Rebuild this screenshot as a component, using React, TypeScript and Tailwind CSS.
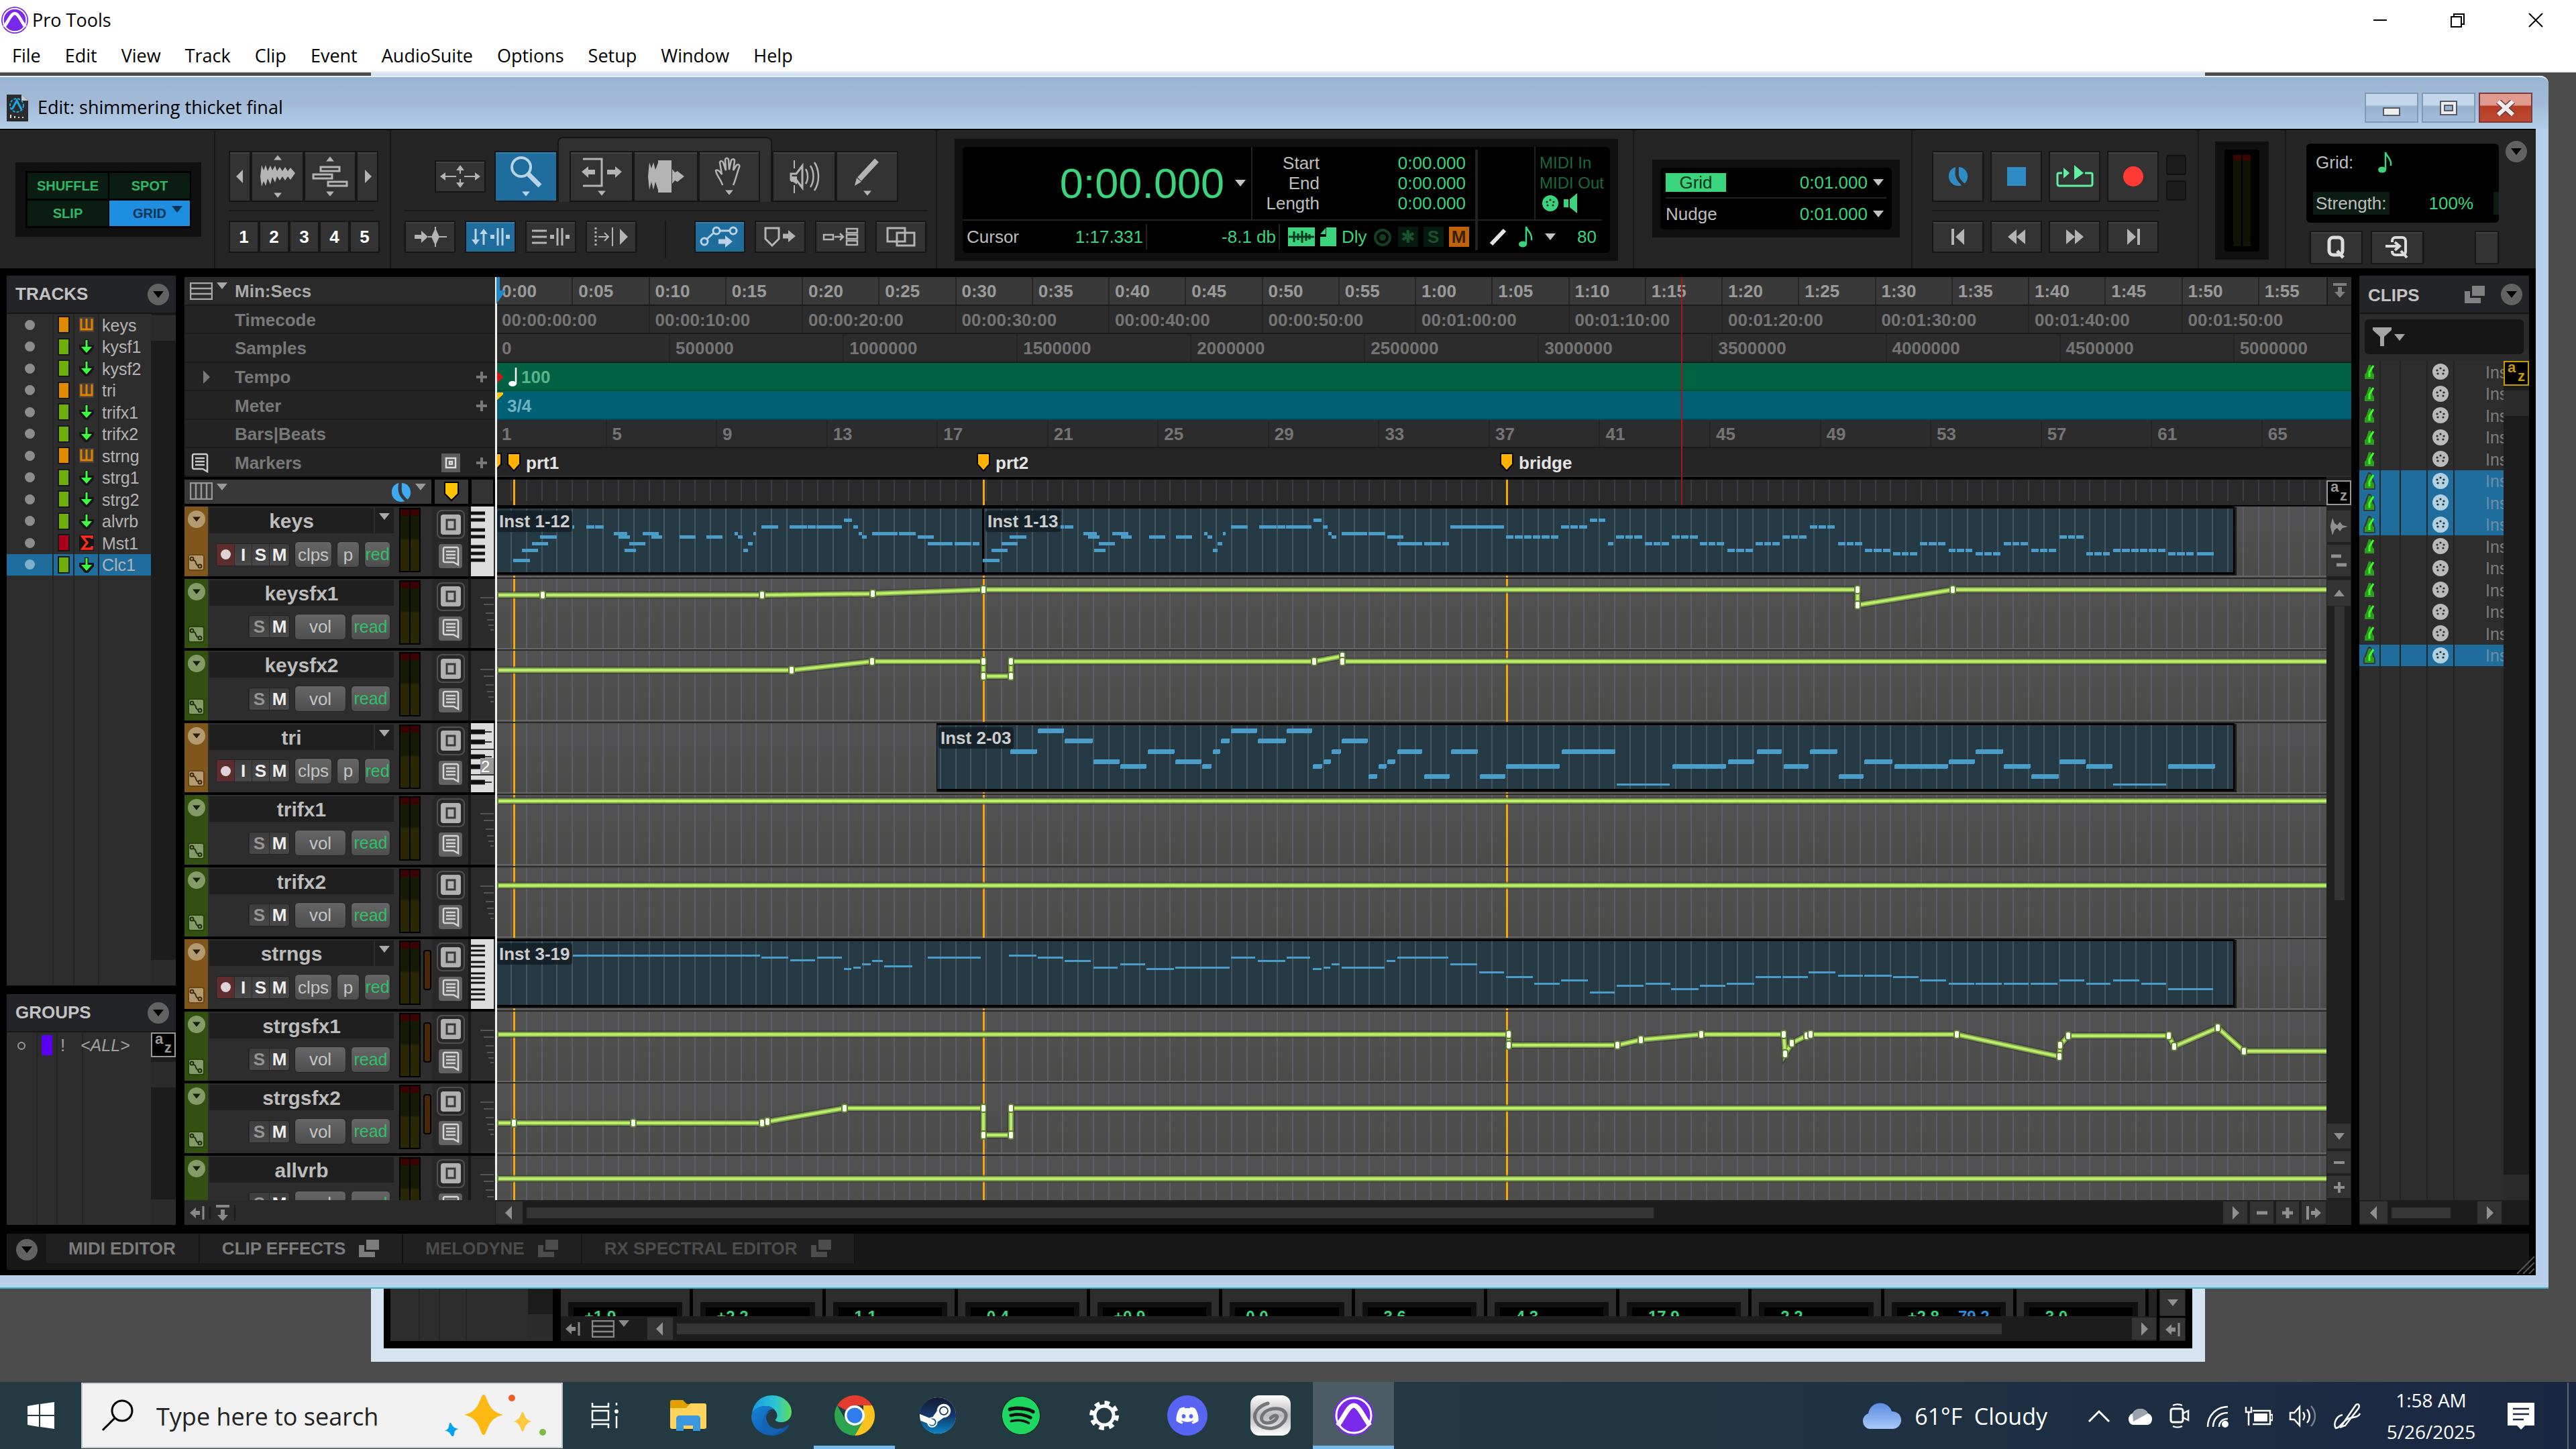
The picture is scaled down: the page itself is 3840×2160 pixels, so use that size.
import type { ReactNode } from "react";
import { FaDiscord, FaSpotify, FaSteam } from "react-icons/fa";

/* ---------- timeline data ---------- */

const PX_PER_SEC = 22.85;
const PX_PER_BAR = 41.14;
const SAMPLE_RATE = 44100;
const CLIP_END = 2593;

// [start, end, y] in lane pixels
type Note = [number, number, number];
type Point = [number, number];

interface Clip {
  name: string;
  start: number;
  end: number;
  notes: Note[];
  noteHeight: number;
}

interface Track {
  name: string;
  kind: "inst" | "aux";
  keyboard?: "wide" | "mid" | "narrow";
  clips?: Clip[];
  line?: Point[];
  gain?: boolean;
}

const melody: Note[] = [
  [27, 52, 80], [40, 64, 65], [55, 79, 55], [67, 92, 45], [115, 118, 30], [136, 148, 30],
  [149, 162, 30], [177, 197, 40], [184, 201, 45], [193, 210, 65], [200, 224, 55], [220, 244, 40],
  [233, 249, 45], [275, 299, 45], [315, 339, 45], [357, 362, 40], [362, 369, 45], [370, 377, 65],
  [377, 384, 55], [385, 389, 40], [397, 422, 30], [439, 465, 30], [466, 478, 30], [479, 517, 30],
  [520, 532, 20], [534, 541, 30], [542, 547, 40], [547, 554, 45], [562, 600, 40], [602, 627, 40],
  [630, 654, 45], [645, 682, 55], [685, 710, 55], [712, 722, 55],
];

// runs of repeated notes, three to the bar
const runs: Note[] = [
  [1507, 1587, 45], [1589, 1630, 30], [1632, 1657, 20], [1659, 1669, 55], [1671, 1712, 45],
  [1714, 1752, 55], [1754, 1795, 45], [1796, 1834, 55], [1837, 1877, 65], [1879, 1917, 55],
  [1919, 1957, 45], [1960, 1999, 30], [2002, 2040, 55], [2042, 2082, 65], [2084, 2122, 70],
  [2124, 2164, 55], [2167, 2204, 65], [2207, 2246, 70], [2249, 2287, 55], [2290, 2329, 65],
  [2332, 2370, 45], [2372, 2409, 70], [2412, 2492, 65], [2494, 2534, 70],
];

function splitRun([start, end, y]: Note): Note[] {
  const count = Math.max(1, Math.round((end - start) / 13.5));
  const step = (end - start) / count;
  return Array.from({ length: count }, (_, i): Note => [
    Math.round(start + i * step),
    Math.round(start + (i + 1) * step) - 2,
    y,
  ]);
}

const keysSecond: Note[] = [
  ...melody.map(([a, b, y]): Note => [a + 700, b + 700, y]),
  [1424, 1504, 30],
  ...runs.flatMap(splitRun),
  [2537, 2562, 70],
];

const triNotes: Note[] = [
  [768, 808, 42], [809, 848, 11], [849, 891, 26], [892, 931, 57], [932, 971, 64], [973, 1013, 42],
  [1014, 1053, 57], [1054, 1068, 64], [1070, 1081, 42], [1082, 1095, 26], [1097, 1136, 11],
  [1137, 1179, 26], [1180, 1218, 11], [1219, 1233, 64], [1235, 1246, 57], [1247, 1261, 42],
  [1262, 1301, 26], [1302, 1315, 79], [1317, 1329, 64], [1330, 1342, 57], [1345, 1382, 42],
  [1385, 1423, 79], [1425, 1465, 42], [1468, 1506, 79], [1507, 1587, 64], [1590, 1670, 42],
  [1672, 1751, 91], [1755, 1835, 64], [1838, 1877, 57], [1881, 1918, 42], [1921, 1958, 64],
  [1960, 2001, 42], [2003, 2040, 79], [2041, 2083, 57], [2086, 2166, 64], [2167, 2206, 57],
  [2207, 2248, 42], [2249, 2289, 64], [2290, 2331, 79], [2332, 2371, 57], [2372, 2411, 64],
  [2412, 2491, 91], [2494, 2564, 64],
];

const stringNotes: Note[] = [
  [116, 395, 24], [397, 437, 27], [440, 477, 31], [480, 517, 27], [520, 531, 44], [534, 545, 42],
  [547, 560, 37], [562, 578, 32], [580, 622, 40], [645, 724, 27], [766, 807, 24], [809, 847, 27], [849, 888, 32],
  [892, 928, 42], [932, 969, 37], [971, 1012, 44], [1014, 1095, 42], [1097, 1133, 27],
  [1137, 1178, 32], [1180, 1215, 27], [1219, 1232, 44], [1235, 1245, 42], [1247, 1259, 37],
  [1262, 1326, 42], [1329, 1342, 32], [1345, 1421, 27], [1424, 1464, 37], [1467, 1504, 49],
  [1507, 1547, 56], [1549, 1587, 66], [1589, 1629, 61], [1632, 1669, 79], [1672, 1712, 69],
  [1715, 1752, 66], [1753, 1794, 74], [1796, 1834, 69], [1836, 1877, 66], [1879, 1917, 56],
  [1919, 1957, 56], [1958, 1998, 49], [2002, 2039, 54], [2041, 2082, 54], [2084, 2122, 56],
  [2124, 2163, 61], [2167, 2205, 66], [2207, 2246, 66], [2249, 2286, 66], [2289, 2329, 66],
  [2332, 2369, 61], [2372, 2408, 66], [2412, 2451, 61], [2454, 2491, 66], [2494, 2561, 74],
];

const tracks: Track[] = [
  {
    name: "keys",
    kind: "inst",
    keyboard: "wide",
    clips: [
      { name: "Inst 1-12", start: 0, end: 728, notes: melody, noteHeight: 5 },
      { name: "Inst 1-13", start: 728, end: CLIP_END, notes: keysSecond, noteHeight: 5 },
    ],
  },
  {
    name: "keysfx1",
    kind: "aux",
    line: [[0, 24], [71, 24], [398, 24], [563, 22], [728, 16], [2031, 16], [2031, 39], [2173, 16], [4000, 16]],
  },
  {
    name: "keysfx2",
    kind: "aux",
    line: [
      [0, 29], [442, 29], [562, 16], [728, 16], [728, 38], [769, 38], [769, 16], [1221, 16],
      [1263, 8], [1263, 16], [4000, 16],
    ],
  },
  {
    name: "tri",
    kind: "inst",
    keyboard: "mid",
    clips: [{ name: "Inst 2-03", start: 658, end: CLIP_END, notes: triNotes, noteHeight: 7 }],
  },
  { name: "trifx1", kind: "aux", line: [[0, 9], [4000, 9]] },
  { name: "trifx2", kind: "aux", line: [[0, 27], [4000, 27]] },
  {
    name: "strngs",
    kind: "inst",
    keyboard: "narrow",
    gain: true,
    clips: [{ name: "Inst 3-19", start: 0, end: CLIP_END, notes: stringNotes, noteHeight: 3 }],
  },
  {
    name: "strgsfx1",
    kind: "aux",
    gain: true,
    line: [
      [0, 34], [1511, 34], [1511, 50], [1673, 50], [1708, 42], [1798, 34], [1921, 34], [1923, 63],
      [1933, 47], [1955, 36], [1961, 34], [2179, 34], [2332, 67], [2333, 50], [2345, 36], [2495, 36],
      [2503, 52], [2568, 24], [2607, 59], [4000, 59],
    ],
  },
  {
    name: "strgsfx2",
    kind: "aux",
    gain: true,
    line: [
      [0, 59], [28, 59], [206, 59], [398, 59], [406, 57], [521, 37], [728, 37], [728, 77], [769, 77],
      [769, 37], [4000, 37],
    ],
  },
  { name: "allvrb", kind: "aux", line: [[0, 34], [4000, 34]] },
];

const trackList = [
  { name: "keys", type: "inst" },
  { name: "kysf1", type: "aux" },
  { name: "kysf2", type: "aux" },
  { name: "tri", type: "inst" },
  { name: "trifx1", type: "aux" },
  { name: "trifx2", type: "aux" },
  { name: "strng", type: "inst" },
  { name: "strg1", type: "aux" },
  { name: "strg2", type: "aux" },
  { name: "alvrb", type: "aux" },
  { name: "Mst1", type: "master" },
  { name: "Clc1", type: "aux", selected: true },
];

const markers = [
  { name: "prt1", x: 28 },
  { name: "prt2", x: 728 },
  { name: "bridge", x: 1508 },
];

const mixLevels = ["+1.9", "+2.2", "-1.1", "-0.4", "+0.9", "0.0", "-3.6", "-4.3", "-17.9", "-2.2", "+2.8", "-3.0"];

const menus = ["File", "Edit", "View", "Track", "Clip", "Event", "AudioSuite", "Options", "Setup", "Window", "Help"];

/* ---------- small shared parts ---------- */

function Tri({ dir = "down", className = "" }: { dir?: "down" | "up" | "left" | "right"; className?: string }) {
  const points = {
    down: "0,0 16,0 8,10",
    up: "0,10 16,10 8,0",
    left: "12,0 12,20 2,10",
    right: "4,0 4,20 14,10",
  }[dir];
  const tall = dir === "left" || dir === "right";
  return (
    <svg viewBox={tall ? "0 0 16 20" : "0 0 16 10"} className={`shrink-0 ${tall ? "h-5 w-4" : "h-[10px] w-4"} ${className}`}>
      <polygon points={points} fill="currentColor" />
    </svg>
  );
}

function RoundMenu({ label }: { label: string }) {
  return (
    <button aria-label={label} className="flex size-8 shrink-0 items-center justify-center rounded-full bg-[#626262] text-black">
      <Tri />
    </button>
  );
}

function ToolButton({
  label,
  className = "",
  active = false,
  children,
}: {
  label: string;
  className?: string;
  active?: boolean;
  children?: ReactNode;
}) {
  return (
    <button
      aria-label={label}
      className={`flex shrink-0 items-center justify-center border-2 border-[#161616] ${
        active
          ? "bg-[#1f6d9c] text-[#b9d4e6] shadow-[inset_0_2px_0_#3480ad]"
          : "bg-[#333] text-[#b4b4b4] shadow-[inset_0_2px_0_#434343]"
      } ${className}`}
    >
      {children}
    </button>
  );
}

function Svg({ w, h, children, className = "" }: { w: number; h: number; children: ReactNode; className?: string }) {
  return (
    <svg width={w} height={h} viewBox={`0 0 ${w} ${h}`} fill="none" stroke="currentColor" strokeWidth="3" className={`shrink-0 ${className}`}>
      {children}
    </svg>
  );
}

function SortButton({ gold = false }: { gold?: boolean }) {
  return (
    <button
      aria-label="Sort by name"
      className={`relative h-[37px] w-full shrink-0 border-2 bg-black text-[22px] leading-4 font-bold ${
        gold ? "border-[#c89b00] text-[#c89b00]" : "border-[#999] text-[#999]"
      }`}
    >
      <span className="absolute top-0 left-1">a</span>
      <span className="absolute right-1 bottom-1">z</span>
    </button>
  );
}

function PopOut() {
  return (
    <Svg w={30} h={26}>
      <path d="M0 8h8v10h16v8H0z" fill="currentColor" stroke="none" />
      <rect x="11" y="0" width="19" height="15" fill="currentColor" stroke="none" />
    </Svg>
  );
}

function Beat({ color = "#2e8bc4" }: { color?: string }) {
  return (
    <svg viewBox="0 0 34 34" className="size-[30px] shrink-0">
      <path d="M13 1C5 3 1 9 1 17s6 15 15 16c3 0 5-1 7-1-7-6-11-13-11-20 0-4 0-7 1-11z" fill={color} />
      <path d="M18 1c8 0 15 7 15 16 0 5-2 9-5 12-6-5-10-10-10-16z" fill={color} />
    </svg>
  );
}

function MidiPlug({ color }: { color: string }) {
  return (
    <svg viewBox="0 0 24 24" className="size-6 shrink-0">
      <circle cx="12" cy="12" r="12" fill={color} />
      <g fill="#2a2a2a">
        <circle cx="7" cy="10" r="1.6" />
        <circle cx="12" cy="7" r="1.6" />
        <circle cx="17" cy="10" r="1.6" />
        <circle cx="8" cy="15" r="1.6" />
        <circle cx="16" cy="15" r="1.6" />
      </g>
    </svg>
  );
}

function EighthNote({ className = "" }: { className?: string }) {
  return (
    <svg viewBox="0 0 24 32" className={`h-8 w-6 shrink-0 ${className}`}>
      <ellipse cx="7" cy="27" rx="6" ry="4.5" fill="currentColor" />
      <path d="M12 27V1c2 7 9 9 8 20" fill="none" stroke="currentColor" strokeWidth="2.5" />
    </svg>
  );
}

/* ---------- application chrome ---------- */

function AvidLogo({ className }: { className: string }) {
  return (
    <svg viewBox="0 0 60 60" className={className}>
      <circle cx="30" cy="30" r="30" fill="#7a29ea" />
      <circle cx="30" cy="30" r="26" fill="none" stroke="#fff" strokeWidth="3" />
      <path d="M6 45C16 32 22 15 30 15S44 32 54 45" fill="none" stroke="#fff" strokeWidth="7" />
    </svg>
  );
}

function AppHeader() {
  return (
    <header className="border-b-2 border-[#eee] bg-white font-['Open_Sans','Segoe_UI',sans-serif] text-[27px] text-black">
      <div className="flex h-[60px] items-center">
        <AvidLogo className="ml-0.5 size-10" />
        <span className="ml-1.5">Pro Tools</span>
        <div className="ml-auto flex items-center pr-12">
          <button aria-label="Minimize" className="mr-[92px]">
            <Svg w={24} h={24}><path d="M2 12h20" strokeWidth="2" /></Svg>
          </button>
          <button aria-label="Restore" className="mr-[92px]">
            <Svg w={24} h={24}><path d="M2 7h15v15H2zM6 7V3h15v15h-4" strokeWidth="2" /></Svg>
          </button>
          <button aria-label="Close">
            <Svg w={24} h={24}><path d="M2 2l20 20M22 2L2 22" strokeWidth="2" /></Svg>
          </button>
        </div>
      </div>
      <nav className="flex h-[46px] items-center gap-9 pl-[18px]">
        {menus.map((menu) => (
          <button key={menu}>{menu}</button>
        ))}
      </nav>
    </header>
  );
}

function TitleBar() {
  return (
    <div className="flex h-[79px] shrink-0 items-center rounded-tr-xl border-t-2 border-[#e4ecf4] bg-gradient-to-b from-[#9ab5d2] via-[#a2bad7] to-[#b3cde9] pt-3.5 pr-6 pl-[10px] font-['Open_Sans','Segoe_UI',sans-serif] text-[27px] text-black">
      <svg viewBox="0 0 32 40" className="h-10 w-8">
        <path d="M0 0h22l10 9v31H0z" fill="#2b2b2b" />
        <path d="M22 0l10 9H22z" fill="#ccc" />
        <circle cx="15" cy="16" r="10" fill="none" stroke="#18a8e8" strokeWidth="2" strokeDasharray="4 2" />
        <path d="M8 22l7-13 7 13" fill="none" stroke="#18a8e8" strokeWidth="3" />
        <path d="M6 30v5M12 32v3M18 33v2M24 33v2" stroke="#ddd" strokeWidth="2" />
      </svg>
      <span className="ml-3.5 flex-1">Edit: shimmering thicket final</span>
      <div className="flex gap-[5px]">
        <button aria-label="Minimize window" className="flex h-[45px] w-20 items-center justify-center border-2 border-[#8199b8] bg-gradient-to-b from-[#c3d6ea] from-40% via-[#98b2cf] via-45% to-[#a5bdd9]">
          <svg viewBox="0 0 26 24" className="h-6 w-[26px]"><rect x="1" y="12" width="24" height="11" fill="#eee" stroke="#555a66" strokeWidth="2" /></svg>
        </button>
        <button aria-label="Maximize window" className="flex h-[45px] w-20 items-center justify-center border-2 border-[#8199b8] bg-gradient-to-b from-[#c3d6ea] from-40% via-[#98b2cf] via-45% to-[#a5bdd9]">
          <svg viewBox="0 0 26 22" className="h-[22px] w-[26px]"><path d="M1 1h24v20H1zM7 7v8h12V7z" fill="#eee" fillRule="evenodd" stroke="#555a66" strokeWidth="2" /></svg>
        </button>
        <button aria-label="Close window" className="flex h-[45px] w-20 items-center justify-center border-2 border-[#7c3a3a] bg-gradient-to-b from-[#e09a8e] from-40% via-[#b53c25] via-45% to-[#bd4a34]">
          <svg viewBox="0 0 28 24" className="h-6 w-7"><path d="M3 2l22 20M25 2L3 22" stroke="#6b3a35" strokeWidth="9" /><path d="M3 2l22 20M25 2L3 22" stroke="#f0eeee" strokeWidth="6" /></svg>
        </button>
      </div>
    </div>
  );
}

/* ---------- edit window toolbar ---------- */

function ModePanel() {
  const cell = "h-[38px] w-[120px] text-[20px] font-bold";
  return (
    <div className="w-[321px] shrink-0 border-r-2 border-[#191919] pt-12 pl-[23px]">
      <div className="w-[277px] bg-[#101010] px-[15px] py-[13px]">
        <div className="grid grid-cols-2 gap-[3px] bg-black p-[3px]">
          <button className={`${cell} bg-[#0b1d13] text-[#2fb865]`}>SHUFFLE</button>
          <button className={`${cell} bg-[#0b1d13] text-[#2fb865]`}>SPOT</button>
          <button className={`${cell} bg-[#0b1d13] text-[#2fb865]`}>SLIP</button>
          <button className={`${cell} flex items-center justify-center gap-2 bg-[#1d8ee0] pl-6 text-[#0b3557]`}>
            GRID
            <Tri className="mt-2 self-start" />
          </button>
        </div>
      </div>
    </div>
  );
}

function ZoomPanel() {
  return (
    <div className="w-[262px] shrink-0 border-r-2 border-[#191919] pt-[31px] pl-5">
      <div className="flex h-[76px]">
        <ToolButton label="Zoom out" className="w-[33px]"><Tri dir="left" /></ToolButton>
        <ToolButton label="Zoom audio" className="w-[79px] flex-col gap-1">
          <Tri dir="up" className="scale-75" />
          <Svg w={52} h={38}>
            <path d="M0 19l2-17 3 8 3-8 3 9 4-8 3 7 4-7 3 8 4-6 4 6 4-6 4 6 4-5 7 8-7 10-4-5-4 6-4-6-4 6-4-6-3 9-4-8-3 11-4-9-3 11-3-7-3 8z" fill="currentColor" stroke="none" />
          </Svg>
          <Tri className="scale-75" />
        </ToolButton>
        <ToolButton label="Zoom MIDI" className="w-[78px] flex-col gap-1">
          <Tri dir="up" className="scale-75" />
          <Svg w={54} h={34}>
            <path d="M13 3h28v6H13zM2 14h28v6H2zM24 25h28v6H24z" />
          </Svg>
          <Tri className="scale-75" />
        </ToolButton>
        <ToolButton label="Zoom in" className="w-[33px]"><Tri dir="right" /></ToolButton>
      </div>
      <div className="mt-3 h-0.5 w-[216px] bg-[#181818]" />
      <div className="mt-[14px] flex">
        {[1, 2, 3, 4, 5].map((n) => (
          <button key={n} className="h-12 w-[45px] border-2 border-[#161616] bg-[#333] text-[26px] font-bold text-white">
            {n}
          </button>
        ))}
      </div>
    </div>
  );
}

function ToolsPanel() {
  return (
    <div className="w-[814px] shrink-0 border-r-2 border-[#191919] pt-[31px] pr-3 pl-5">
      <div className="flex h-[76px] items-center pl-[45px]">
        <ToolButton label="Zoom toggle" className="h-12 w-[76px]">
          <Svg w={60} h={34}>
            <path d="M6 17h18M36 17h18M30 4v9M30 21v9" strokeWidth="2" />
            <path d="M0 17l8-6v12zM60 17l-8-6v12zM30 0l-6 8h12zM30 34l-6-8h12z" fill="currentColor" stroke="none" />
          </Svg>
        </ToolButton>
        <ToolButton label="Zoomer" active className="ml-[13px] h-full w-[94px] flex-col gap-1">
          <Svg w={50} h={48}><circle cx="18" cy="17" r="14" strokeWidth="4" /><path d="M28 27l18 18" strokeWidth="7" /></Svg>
          <Tri className="scale-75" />
        </ToolButton>
        <div className="h-[97px] self-end rounded-t-lg border-2 border-b-0 border-[#161616] bg-[#303030] px-4 pt-[19px]">
          <div className="flex h-[76px]">
            <ToolButton label="Trim" className="w-[95px] flex-col gap-1">
              <Svg w={60} h={46}>
                <path d="M2 4h28v40H2" />
                <path d="M0 23l10-8v5h10v7H10v5zM60 23l-10-8v5H38v7h12v5z" fill="currentColor" stroke="none" />
              </Svg>
              <Tri className="scale-75" />
            </ToolButton>
            <ToolButton label="Selector" className="w-[97px]">
              <Svg w={54} h={50}>
                <path
                  d="M0 25l2-21 3 9 3-9 3 11 4-10v40l-4-12-3 12-3-12-3 12zM36 14l4 5 4-2 10 8-10 8-4-2-4 5z"
                  fill="currentColor"
                  stroke="none"
                />
                <rect x="15" y="1" width="20" height="48" fill="currentColor" stroke="none" />
              </Svg>
            </ToolButton>
            <ToolButton label="Grabber" className="w-[92px] flex-col gap-1">
              <Svg w={44} h={44}>
                <path d="M12 42C10 34 2 26 2 20c4-2 7 3 9 6L8 8c1-3 4-2 5 0l4 12-1-16c1-3 4-3 5 0l1 15 3-14c2-3 5-2 5 1l-2 14 5-8c3-2 5 0 4 3-3 8-5 18-9 27" strokeWidth="2.5" />
              </Svg>
              <Tri className="scale-75" />
            </ToolButton>
          </div>
        </div>
        <ToolButton label="Scrubber" className="h-full w-[95px]">
          <Svg w={46} h={50}>
            <path d="M8 1v12M8 38v12" strokeWidth="2" />
            <path d="M3 21h8l9-12v33l-9-12H3z" />
            <path d="M3 25h9v12l-6-4H3z" fill="currentColor" stroke="none" />
            <path d="M25 14c4 6 4 16 0 22M32 9c6 9 6 23 0 32M38 4c8 12 8 30 0 42" strokeWidth="2.5" />
          </Svg>
        </ToolButton>
        <ToolButton label="Pencil" className="h-full w-[93px] flex-col gap-1">
          <Svg w={44} h={46}><path d="M10 34L36 6" strokeWidth="8" /><path d="M3 44l3-12 7 6z" fill="currentColor" stroke="none" /></Svg>
          <Tri className="scale-75" />
        </ToolButton>
      </div>
      <div className="mt-3 h-0.5 bg-[#181818]" />
      <div className="mt-[14px] flex h-12 gap-[14px]">
        <ToolButton label="Tab to transient" className="w-[76px]">
          <Svg w={50} h={30}>
            <path d="M2 15h14" strokeWidth="6" /><path d="M12 6l10 9-10 9z" fill="currentColor" stroke="none" />
            <path d="M22 15h28M33 0v30" strokeWidth="2" /><path d="M33 2l6 13-6 13-6-13z" fill="currentColor" stroke="none" />
          </Svg>
        </ToolButton>
        <ToolButton label="Mirrored editing" active className="w-[76px]">
          <Svg w={58} h={28}>
            <path d="M7 2v22M19 26V4M40 1v26M47 1v26" /><path d="M1 18h12l-6 8zM13 10h12l-6-8z" fill="currentColor" stroke="none" />
            <path d="M29 14h6M52 14h6" strokeWidth="6" />
          </Svg>
        </ToolButton>
        <ToolButton label="Automation follows edit" className="w-[76px]">
          <Svg w={56} h={28}><path d="M0 5h22M0 14h22M0 23h22M38 1v26M45 1v26" /><path d="M27 14h6M50 14h6" strokeWidth="6" /></Svg>
        </ToolButton>
        <ToolButton label="Insertion follows playback" className="w-[76px]">
          <Svg w={50} h={28}><path d="M2 0v28" strokeDasharray="3 3" /><path d="M6 14h14M15 8l6 6-6 6M27 0v28" strokeWidth="2" /><path d="M38 2l12 12-12 12z" fill="currentColor" stroke="none" /></Svg>
        </ToolButton>
        <div className="mx-7 h-14 w-0.5 bg-[#181818]" />
        <ToolButton label="Link edit" active className="w-[76px]">
          <Svg w={60} h={34}>
            <circle cx="7" cy="24" r="5" /><circle cx="25" cy="8" r="5" /><circle cx="50" cy="8" r="5" />
            <path d="M11 20l10-9M30 8h15" /><path d="M28 24h12" strokeWidth="7" /><path d="M38 15l11 9-11 9z" fill="currentColor" stroke="none" />
          </Svg>
        </ToolButton>
        <ToolButton label="Link markers" className="w-[76px]">
          <Svg w={48} h={30}><path d="M2 2h20v16l-10 10L2 18z" /><path d="M28 14h10" strokeWidth="7" /><path d="M36 5l11 9-11 9z" fill="currentColor" stroke="none" /></Svg>
        </ToolButton>
        <ToolButton label="Link track" className="w-[76px]">
          <Svg w={54} h={28}><path d="M2 11h14v7H2zM36 2h16v6H36zM36 11h16v6H36zM36 20h16v6H36zM18 14h12M26 9l5 5-5 5" strokeWidth="2.5" /></Svg>
        </ToolButton>
        <ToolButton label="Layered editing" className="w-[76px]">
          <Svg w={44} h={30}><path d="M2 2h26v20H2zM16 9h26v19H16z" /></Svg>
        </ToolButton>
      </div>
    </div>
  );
}

function Counter() {
  return (
    <div className="w-[1039px] shrink-0 border-r-2 border-[#191919] pt-[13px] pl-[26px]">
      <div className="w-[989px] bg-[#101010] p-3 text-[26px] leading-[30px] text-[#39d47c]">
        <div className="flex rounded-md bg-black">
          <div className="w-[764px]">
            <div className="flex h-[108px]">
              <div className="flex w-[432px] items-center justify-end gap-4 border-r-2 border-[#222] pr-2">
                <output className="text-[63px] leading-none">0:00.000</output>
                <Tri className="text-[#c4c4c4]" />
              </div>
              <dl className="grid flex-1 grid-cols-[100px_1fr] content-center pr-[14px] text-right">
                <dt className="text-[#bdbdbd]">Start</dt><dd>0:00.000</dd>
                <dt className="text-[#bdbdbd]">End</dt><dd>0:00.000</dd>
                <dt className="text-[#bdbdbd]">Length</dt><dd>0:00.000</dd>
              </dl>
            </div>
            <div className="flex h-[50px] items-center border-t-2 border-[#222]">
              <div className="flex w-[275px] justify-between border-r-2 border-[#222] py-1 pr-1 pl-1.5">
                <span className="text-[#bdbdbd]">Cursor</span>
                <span>1:17.331</span>
              </div>
              <div className="w-[198px] border-r-2 border-[#222] py-1 pr-1 text-right">-8.1 db</div>
              <div className="flex flex-1 items-center gap-2 pl-3">
                <span className="flex h-7 w-10 items-center justify-center bg-[#39d47c] text-[#0b3a20]">
                  <Svg w={38} h={22}><path d="M0 11h38M8 3v16M14 6v10M20 2v18M26 5v12M31 7v8" strokeWidth="3" /></Svg>
                </span>
                <Svg w={24} h={28}><path d="M9 0h15v28H0V14h9z" fill="currentColor" stroke="none" /><path d="M0 10L8 1v9z" fill="currentColor" stroke="none" /></Svg>
                <span>Dly</span>
                <Svg w={30} h={30} className="text-[#124022]"><circle cx="15" cy="16" r="11" strokeWidth="4" /><circle cx="15" cy="16" r="5" fill="currentColor" stroke="none" /></Svg>
                <span className="flex h-[30px] w-[30px] items-center justify-center bg-[#06190e] text-[#1a5030]">✱</span>
                <span className="flex h-[30px] w-[30px] items-center justify-center bg-[#06190e] font-bold text-[#1a5030]">S</span>
                <span className="flex h-[30px] w-[30px] items-center justify-center bg-[#c0620a] font-bold text-[#3d1f02]">M</span>
              </div>
            </div>
          </div>
          <div className="my-1 w-1 bg-[#222]" />
          <div className="flex-1">
            <div className="ml-[84px] flex h-[108px] flex-col justify-center border-l-2 border-[#222] pl-1.5 text-[24px] text-[#17693a]">
              <span>MIDI In</span>
              <span className="whitespace-nowrap">MIDI Out</span>
              <span className="flex h-[30px] items-center gap-2 pl-1 text-[#39d47c]">
                <MidiPlug color="#39d47c" />
                <Svg w={22} h={30}><path d="M0 9h7v12H0zM9 9L20 0v30L9 21z" fill="currentColor" stroke="none" /></Svg>
              </span>
            </div>
            <div className="mr-3 flex h-[50px] items-center border-t-2 border-[#222] pl-4">
              <Svg w={28} h={30} className="text-[#e4e4e4]"><path d="M4 26L24 5" strokeWidth="6" /></Svg>
              <EighthNote className="ml-4" />
              <Tri className="ml-4 text-[#c4c4c4]" />
              <span className="ml-auto pr-2">80</span>
            </div>
          </div>
        </div>
      </div>
    </div>
  );
}

function GridNudge() {
  return (
    <div className="w-[415px] shrink-0 border-r-2 border-[#191919] pt-11 pl-[27px]">
      <div className="w-[369px] bg-[#101010] p-3 text-[26px] text-[#39d47c]">
        <div className="rounded-md bg-black px-2">
          <div className="flex h-[44px] items-center">
            <button className="h-7 w-[90px] bg-[#39d47c] leading-7 text-[#08351c]">Grid</button>
            <span className="ml-auto">0:01.000</span>
            <Tri className="mr-1 ml-2 text-[#c4c4c4]" />
          </div>
          <div className="flex h-[48px] items-center border-t-2 border-[#222]">
            <span className="text-[#bdbdbd]">Nudge</span>
            <span className="ml-auto">0:01.000</span>
            <Tri className="mr-1 ml-2 text-[#c4c4c4]" />
          </div>
        </div>
      </div>
    </div>
  );
}

function Transport() {
  return (
    <div className="flex w-[427px] shrink-0 gap-[10px] border-r-2 border-[#191919] pt-[31px] pl-[29px]">
      <div className="w-[339px]">
        <div className="flex h-[76px] gap-[10px]">
          <ToolButton label="Online" className="w-[77px]"><Beat /></ToolButton>
          <ToolButton label="Stop" className="w-[77px]"><span className="size-7 bg-[#2e8bc4]" /></ToolButton>
          <ToolButton label="Play" className="w-[77px]">
            <Svg w={56} h={34} className="text-[#5ff2a2]">
              <path d="M9 12H4c-2 0-2 1-2 2v14c0 2 1 3 3 3h46c2 0 3-1 3-3V14c0-1 0-2-2-2h-9" strokeWidth="3" />
              <path d="M11 4l9 8-9 8zM27 0l14 12-14 10z" fill="currentColor" stroke="none" />
            </Svg>
          </ToolButton>
          <ToolButton label="Record" className="w-[77px]"><span className="size-[30px] rounded-full bg-[#ff3a34]" /></ToolButton>
        </div>
        <div className="mt-3 h-0.5 bg-[#181818]" />
        <div className="mt-[14px] flex h-12 gap-[10px]">
          <ToolButton label="Return to zero" className="w-[77px]">
            <Svg w={20} h={24}><path d="M2 0v24" strokeWidth="4" /><path d="M19 0v24L6 12z" fill="currentColor" stroke="none" /></Svg>
          </ToolButton>
          <ToolButton label="Rewind" className="w-[77px]">
            <Svg w={26} h={22}><path d="M13 0v22L0 11zM26 0v22L13 11z" fill="currentColor" stroke="none" /></Svg>
          </ToolButton>
          <ToolButton label="Fast forward" className="w-[77px]">
            <Svg w={26} h={22}><path d="M0 0v22l13-11zM13 0v22l13-11z" fill="currentColor" stroke="none" /></Svg>
          </ToolButton>
          <ToolButton label="Go to end" className="w-[77px]">
            <Svg w={20} h={24}><path d="M18 0v24" strokeWidth="4" /><path d="M1 0v24l13-12z" fill="currentColor" stroke="none" /></Svg>
          </ToolButton>
        </div>
      </div>
      <div className="flex flex-col gap-2 pt-1.5">
        <div className="h-[30px] w-[30px] rounded border-2 border-[#101010] bg-[#1c1c1c]" />
        <div className="h-[30px] w-[30px] rounded border-2 border-[#101010] bg-[#1c1c1c]" />
      </div>
    </div>
  );
}

function QuantizePanel() {
  return (
    <div className="flex flex-1 pt-4 pl-[30px]">
      <div className="w-[287px] overflow-hidden pt-1">
        <div className="flex h-[118px] flex-col justify-between rounded-md bg-black py-3 pl-[10px] text-[26px]">
          <div className="flex h-8 items-center text-[#bdbdbd]">
            <span className="pl-1">Grid:</span>
            <EighthNote className="ml-9 text-[#39d47c]" />
          </div>
          <div className="flex h-[34px] items-center">
            <span className="bg-[#0b1d13] px-1 leading-[34px] text-[#bdbdbd]">Strength:</span>
            <span className="ml-auto text-[#39d47c]">100%</span>
            <span className="ml-[30px] h-[34px] w-2 bg-[#0b1d13]" />
          </div>
        </div>
        <div className="mt-3 flex gap-3 pl-[5px]">
          <ToolButton label="Quantize" className="h-[50px] w-[79px]">
            <Svg w={32} h={36} className="text-[#ddd]"><rect x="5" y="3" width="20" height="26" rx="6" strokeWidth="5" /><path d="M17 23l9 10" strokeWidth="5" /></Svg>
          </ToolButton>
          <ToolButton label="Input quantize" className="h-[50px] w-[79px]">
            <Svg w={40} h={36} className="text-[#ddd]"><path d="M12 10V8c0-3 2-5 5-5h10c3 0 5 2 5 5v16c0 3-2 5-5 5H17c-3 0-5-2-5-5v-1" strokeWidth="4" /><path d="M25 23l9 10M2 16h18M16 10l7 6-7 6" strokeWidth="4" /></Svg>
          </ToolButton>
          <ToolButton label="More quantize options" className="ml-auto h-[50px] w-9" />
        </div>
      </div>
      <div className="ml-2.5 self-start">
        <RoundMenu label="Toolbar menu" />
      </div>
    </div>
  );
}

function Toolbar() {
  return (
    <div className="flex h-[208px] shrink-0 overflow-hidden border-t-2 border-black bg-[#252525]">
      <ModePanel />
      <ZoomPanel />
      <ToolsPanel />
      <Counter />
      <GridNudge />
      <Transport />
      <div className="w-[130px] shrink-0 border-r-2 border-[#191919] pt-[17px] pl-6">
        <div className="h-[176px] w-20 bg-[#101010] px-[14px] py-3">
          <div className="flex h-full justify-center gap-0.5 rounded bg-black py-2">
            <div className="w-3 border-t-8 border-[#3c0303] bg-[#0f1404]" />
            <div className="w-3 border-t-8 border-[#3c0303] bg-[#0f1404]" />
          </div>
        </div>
      </div>
      <QuantizePanel />
    </div>
  );
}

/* ---------- side lists ---------- */

const panelHeader =
  "flex h-[57px] shrink-0 items-center border-b-2 border-[#161616] bg-[#232427] pr-[10px] pl-[13px] text-[26px] font-bold text-[#c2c2c2]";

function PanelHeader({ title, children }: { title: string; children?: ReactNode }) {
  return (
    <div className={panelHeader}>
      <h2 className="flex-1">{title}</h2>
      {children}
      <RoundMenu label={`${title} menu`} />
    </div>
  );
}

function TypeIcon({ type }: { type: string }) {
  if (type === "inst") {
    return (
      <svg viewBox="0 0 22 22" className="h-[22px] w-[22px] bg-[#4a4238]">
        <path d="M3 2v16h16V2M11 2v16" fill="none" stroke="#e08200" strokeWidth="3" />
      </svg>
    );
  }
  if (type === "master") {
    return (
      <svg viewBox="0 0 22 24" className="h-6 w-[22px] bg-[#141414]">
        <path d="M19 6V3H5l7 9-7 9h14v-4" fill="none" stroke="#ff2a1c" strokeWidth="3.5" />
      </svg>
    );
  }
  return (
    <svg viewBox="0 0 22 24" className="h-6 w-[22px]">
      <path d="M11 1v20M2 12l9 10 9-10z" fill="#161616" stroke="#161616" strokeWidth="6" />
      <path d="M11 2v12" stroke="#3cff3c" strokeWidth="3" />
      <path d="M3 12h16l-8 9z" fill="#3cff3c" />
    </svg>
  );
}

const swatch: Record<string, string> = {
  inst: "bg-[#e08a00]",
  aux: "bg-[#6fae0c]",
  master: "bg-[#a8001c]",
};

function TrackListPanel() {
  return (
    <section className="flex min-h-0 flex-1 flex-col">
      <PanelHeader title="TRACKS" />
      <div className="flex min-h-0 flex-1">
        <div className="flex flex-1 flex-col bg-[#2d2d2d]">
          <ul className="flex h-[390px] shrink-0 flex-col">
            {trackList.map((t) => (
              <li key={t.name} className={`flex flex-1 ${t.selected ? "bg-[#1f6d9c]" : ""}`}>
                <span className="flex w-[70px] items-center justify-center border-r-2 border-[#242424]">
                  <span className={`size-[15px] rounded-full ${t.selected ? "bg-[#7db0cc]" : "bg-[#8c8c8c]"}`} />
                </span>
                <span className="flex w-[31px] items-center justify-center border-r-2 border-[#242424]">
                  <span className={`h-[26px] w-[18px] border-2 border-[#181818] ${swatch[t.type]}`} />
                </span>
                <span className="flex w-[37px] items-center justify-center border-r-2 border-[#242424]">
                  <TypeIcon type={t.type} />
                </span>
                <span className="flex items-center pt-0.5 pl-1 text-[25px] leading-none text-[#b4b4b4]">{t.name}</span>
              </li>
            ))}
          </ul>
          <div className="flex flex-1">
            <span className="w-[70px] border-r-2 border-[#242424]" />
            <span className="w-[31px] border-r-2 border-[#242424]" />
            <span className="w-[37px] border-r-2 border-[#242424]" />
          </div>
        </div>
        <div className="flex w-[37px] flex-col justify-between bg-[#1c1c1c] pt-0.5">
          <div className="h-[38px] bg-[#2b2b2b]" />
          <div className="h-[38px] bg-[#2b2b2b]" />
        </div>
      </div>
    </section>
  );
}

function GroupsPanel() {
  return (
    <section className="flex h-[344px] shrink-0 flex-col">
      <PanelHeader title="GROUPS" />
      <div className="flex min-h-0 flex-1">
        <div className="flex flex-1 bg-[#2d2d2d] text-[26px] text-[#a0a0a0]">
          <span className="flex w-[46px] justify-center border-r-2 border-[#242424] pt-3">
            <span className="mt-0.5 size-3 rounded-full border-2 border-[#999]" />
          </span>
          <span className="w-[30px] border-r-2 border-[#242424] pt-1 pl-1.5">
            <span className="block h-[30px] w-4 bg-[#5a00f0]" />
          </span>
          <span className="w-[38px] border-r-2 border-[#242424] pl-1">!</span>
          <span className="-ml-1 flex-1 text-[25px] leading-[38px] italic">&lt;ALL&gt;</span>
        </div>
        <div className="flex w-[37px] flex-col justify-between bg-[#1c1c1c]">
          <div>
            <SortButton />
            <div className="mt-0.5 h-[38px] bg-[#2b2b2b]" />
          </div>
          <div className="h-[38px] bg-[#2b2b2b]" />
        </div>
      </div>
    </section>
  );
}

function Metronome({ framed }: { framed: boolean }) {
  return (
    <svg viewBox="0 0 18 26" className="h-[26px] w-[18px]">
      {framed && <path d="M7 0h4l7 18v8H0v-8z" fill="#343a3c" />}
      <path d="M8 3h3l3 12 2 2v7H2v-7l2-2z" fill="#2f9a20" />
      <path d="M15 4l-6 10v7" fill="none" stroke="#3cff28" strokeWidth="3" />
    </svg>
  );
}

function ClipsPanel() {
  const selected = [5, 6, 7, 13];
  const rows = Array.from({ length: 14 }, (_, i) => i);
  return (
    <section className="flex w-[253px] shrink-0 flex-col">
      <div className={panelHeader}>
        <h2 className="flex-1 pt-1">CLIPS</h2>
        <span className="mr-6 text-[#808080]"><PopOut /></span>
        <RoundMenu label="Clips menu" />
      </div>
      <div className="shrink-0 bg-[#2b2b2b] p-2 pb-[10px]">
        <button aria-label="Filter clips" className="flex h-[52px] w-full items-center gap-1 rounded-md bg-[#161616] pl-3 text-[#a4a4a4]">
          <Svg w={28} h={30}><path d="M0 1h28v4L17 15v14h-6V15L0 5z" fill="currentColor" stroke="none" /></Svg>
          <Tri className="mt-0.5" />
        </button>
      </div>
      <div className="flex min-h-0 flex-1">
        <div className="flex flex-1 flex-col bg-[#2d2d2d]">
          <ul className="flex h-[455px] shrink-0 flex-col">
            {rows.map((i) => {
              const on = selected.includes(i);
              return (
                <li key={i} className={`flex flex-1 ${on ? "bg-[#1f6d9c]" : ""}`}>
                  <span className="flex w-8 items-center justify-center border-r-2 border-[#242424]"><Metronome framed={on} /></span>
                  <span className="w-[30px] border-r-2 border-[#242424]" />
                  <span className="w-10 border-r-2 border-[#242424]" />
                  <span className="flex w-10 items-center justify-center border-r-2 border-[#242424]"><MidiPlug color={on ? "#b2d2e2" : "#bababa"} /></span>
                  <span className={`flex w-[73px] items-center overflow-hidden pt-0.5 pl-[46px] text-[25px] leading-none whitespace-nowrap ${on ? "text-[#6a8ea4]" : "text-[#7c7c7c]"}`}>Ins</span>
                </li>
              );
            })}
          </ul>
          <div className="flex flex-1">
            <span className="w-8 border-r-2 border-[#242424]" />
            <span className="w-[30px] border-r-2 border-[#242424]" />
            <span className="w-10 border-r-2 border-[#242424]" />
            <span className="w-10 border-r-2 border-[#242424]" />
          </div>
        </div>
        <div className="flex w-[38px] flex-col justify-between bg-[#1c1c1c]">
          <div>
            <SortButton gold />
            <div className="mt-0.5 h-[38px] bg-[#2b2b2b]" />
          </div>
          <div className="h-[38px] bg-[#2b2b2b]" />
        </div>
      </div>
      <div className="flex h-[37px] shrink-0 items-center bg-[#1c1c1c] text-[#909090]">
        <ScrollButton label="Scroll clips left" className="w-[43px]"><Tri dir="left" /></ScrollButton>
        <div className="ml-[5px] h-4 w-[88px] bg-[#363636]" />
        <ScrollButton label="Scroll clips right" className="ml-auto w-[38px]"><Tri dir="right" /></ScrollButton>
        <div className="w-10" />
      </div>
    </section>
  );
}

function ScrollButton({ label, className = "", children }: { label: string; className?: string; children?: ReactNode }) {
  return (
    <button aria-label={label} className={`flex h-[35px] shrink-0 items-center justify-center border border-[#202020] bg-[#333] text-[#909090] ${className}`}>
      {children}
    </button>
  );
}

/* ---------- arrange area ---------- */

const rulerBase = "flex items-center border-b-2 border-[#1a1a1a]";

function CommentIcon({ className = "" }: { className?: string }) {
  return (
    <Svg w={26} h={30} className={className}>
      <path d="M2 4c0-1 1-2 2-2h18c1 0 2 1 2 2v24l-7-4H4c-1 0-2-1-2-2zM6 8h14M6 13h14M6 18h14" strokeWidth="2.5" />
    </Svg>
  );
}

function RulerLabels() {
  const rows = ["Min:Secs", "Timecode", "Samples", "Tempo", "Meter", "Bars|Beats", "Markers"];
  return (
    <div className="grid h-[298px] shrink-0 grid-rows-7 text-[26px] font-bold text-[#787878]">
      {rows.map((row, i) => (
        <div key={row} className={`${rulerBase} pt-0.5 pr-3 ${i === 0 ? "bg-[#2a2a2a] text-[#a8a8a8]" : "bg-[#242424]"}`}>
          <span className="flex w-[75px] items-center pl-2">
            {i === 0 && (
              <span className="flex items-start gap-1.5">
                <Svg w={34} h={26}><path d="M1 1h32v24H1zM1 9h32M1 17h32" strokeWidth="2.5" /></Svg>
                <Tri />
              </span>
            )}
            {i === 3 && <Tri dir="right" className="ml-4" />}
            {i === 6 && <CommentIcon className="ml-0.5 text-[#ccc]" />}
          </span>
          <span className="flex-1 leading-none">{row}</span>
          {i === 6 && (
            <span className="mr-6 flex h-7 w-7 items-center justify-center bg-[#5c5c5c] text-[#ddd]">
              <Svg w={18} h={18}><path d="M2 2h14v14H2zM7 7h4v4H7z" strokeWidth="2.5" /></Svg>
            </span>
          )}
          {(i === 3 || i === 4 || i === 6) && (
            <button aria-label={`Add ${row}`}>
              <Svg w={16} h={16}><path d="M8 0v16M0 8h16" strokeWidth="4" /></Svg>
            </button>
          )}
        </div>
      ))}
    </div>
  );
}

function TickRow({ labels, step, className }: { labels: string[]; step: number; className: string }) {
  return (
    <div className={`flex overflow-hidden border-b-2 border-[#1a1a1a] ${className}`}>
      {labels.map((label) => (
        <span key={label} className="flex shrink-0 items-center border-l-2 border-[#242424] pt-0.5 pl-2 leading-none" style={{ width: step }}>
          {label}
        </span>
      ))}
    </div>
  );
}

const two = (n: number) => String(n).padStart(2, "0");

function Rulers() {
  const minSecs = Array.from({ length: 24 }, (_, i) => `${Math.floor((i * 5) / 60)}:${two((i * 5) % 60)}`);
  const timecode = Array.from({ length: 12 }, (_, i) => `00:${two(Math.floor((i * 10) / 60))}:${two((i * 10) % 60)}:00`);
  const samples = Array.from({ length: 11 }, (_, i) => String(i * 500000));
  const bars = Array.from({ length: 17 }, (_, i) => String(i * 4 + 1));
  return (
    <div className="grid h-[298px] shrink-0 grid-cols-1 grid-rows-7 text-[26px] font-bold">
      <TickRow labels={minSecs} step={PX_PER_SEC * 5} className="bg-[#393939] text-[#9a9a9a]" />
      <TickRow labels={timecode} step={PX_PER_SEC * 10} className="bg-[#2c2c2c] text-[#747474]" />
      <TickRow labels={samples} step={(500000 / SAMPLE_RATE) * PX_PER_SEC} className="bg-[#2c2c2c] text-[#747474]" />
      <div className="flex items-center border-b-2 border-[#00502f] bg-[#006243] pt-0.5 leading-none text-[#58b48a]">
        <svg viewBox="0 0 12 24" className="h-6 w-3"><path d="M0 0l12 12L0 24z" fill="#e01010" /></svg>
        <svg viewBox="0 0 14 28" className="mr-[5px] ml-2 h-7 w-3.5"><ellipse cx="6" cy="24" rx="6" ry="4" fill="#fff" /><path d="M11 0v24" stroke="#fff" strokeWidth="2.5" /></svg>
        100
      </div>
      <div className="flex border-b-2 border-[#004a5c] bg-[#006076] text-[#6fb0c2]">
        <svg viewBox="0 0 12 14" className="mt-0.5 h-3.5 w-3"><path d="M0 0h12v3L0 14z" fill="#ffc400" /></svg>
        <span className="flex items-center pt-0.5 pl-1.5 leading-none">3/4</span>
      </div>
      <TickRow labels={bars} step={PX_PER_BAR * 4} className="bg-[#2c2c2c] text-[#747474]" />
      <div className="relative overflow-hidden border-b-2 border-[#2e2e2e] bg-[#252525] text-[#e4e4e4]">
        <Flag x={0} />
        {markers.map((m) => (
          <Flag key={m.name} x={m.x} name={m.name} />
        ))}
      </div>
    </div>
  );
}

function Flag({ x, name }: { x: number; name?: string }) {
  return (
    <span className="absolute inset-y-0 flex items-center" style={{ left: x - 10 }}>
      <svg viewBox="0 0 20 28" className="h-7 w-5">
        <path d="M1 1h18v16l-9 10-9-10z" fill="#ffb000" stroke="#000" strokeWidth="2" />
      </svg>
      {name && <span className="pt-0.5 pl-2 leading-none">{name}</span>}
    </span>
  );
}

const secondLines = Array.from({ length: 170 }, (_, i) => Math.round(PX_PER_SEC * (i + 1)));

function GridLines({ height, color }: { height: number; color: string }) {
  return (
    <g fill={color} shapeRendering="crispEdges">
      {secondLines.map((x) => (
        <rect key={x} x={x} y={0} width={2} height={height} />
      ))}
    </g>
  );
}

function ClipShape({ clip }: { clip: Clip }) {
  const { start, end, notes, noteHeight } = clip;
  return (
    <g shapeRendering="crispEdges">
      <rect x={start} y={1} width={end - start + 3} height={102} fill="#1b1b1b" />
      <rect x={start} y={0} width={end - start} height={101} fill="#000" />
      <rect x={start + 1} y={3} width={end - start - 3} height={95} fill="#263a45" />
      {secondLines
        .filter((x) => x > start && x < end - 3)
        .map((x) => (
          <rect key={x} x={x} y={3} width={2} height={95} fill="#435660" />
        ))}
      {notes.map(([a, b, y]) => {
        const h = y === 91 ? 3 : noteHeight;
        return <rect key={`${a}-${y}`} x={a} y={y - Math.floor(h / 2)} width={b - a} height={h} rx={h === 7 ? 2 : 0} fill="#4a9dc8" />;
      })}
    </g>
  );
}

function AutomationLine({ points }: { points: Point[] }) {
  const path = points.map((p) => p.join(",")).join(" ");
  return (
    <g fill="none">
      <polyline points={path} stroke="#333" strokeOpacity="0.6" strokeWidth="11" />
      <polyline points={path} stroke="#7c9c4c" strokeWidth="8" />
      <polyline points={path} stroke="#baee6a" strokeWidth="4" />
      {points.slice(0, -1).map(([x, y], i) => (
        <rect key={i} x={x - 4} y={y - 6} width={8} height={12} rx={3} fill="#f6fcec" stroke="#5e7c34" strokeWidth="2" />
      ))}
    </g>
  );
}

function Lane({ track }: { track: Track }) {
  return (
    <div className="relative flex-1 overflow-hidden border-b-2 border-[#2a2a2a] bg-gradient-to-b from-[#525252] to-[#4b4b4a]">
      <svg className="absolute inset-0 h-full w-full">
        <GridLines height={103} color="#5e5e68" />
        <rect x={0} y={103} width={4000} height={2} fill="#666" />
        {markers.map((m) => (
          <rect key={m.name} x={m.x - 1} y={0} width={3} height={108} fill="#f6a808" shapeRendering="crispEdges" />
        ))}
        {track.clips?.map((clip) => <ClipShape key={clip.name} clip={clip} />)}
        {track.line && <AutomationLine points={track.line} />}
      </svg>
      {track.clips?.map((clip) => (
        <span
          key={clip.name}
          className="absolute top-1.5 rounded-sm bg-[#111d23]/80 px-[3px] text-[26px] leading-8 font-bold text-[#ccc]"
          style={{ left: clip.start + 3 }}
        >
          {clip.name}
        </span>
      ))}
    </div>
  );
}

function Keyboard({ kind }: { kind?: Track["keyboard"] }) {
  if (!kind) {
    return (
      <svg viewBox="0 0 34 100" className="h-[100px] w-[34px] bg-[#2a2a2a]">
        <path d="M14 28h20M19 38h15M22 51h12M24 61h10M26 69h8M29 76h5" stroke="#555" strokeWidth="2" />
      </svg>
    );
  }
  const keys = {
    wide: [10, 20, 35, 45, 60, 70, 80],
    mid: [13, 28, 50, 65, 88],
    narrow: [10, 17, 24, 34, 41, 51, 58, 65, 75, 82, 90],
  }[kind];
  const h = { wide: 5, mid: 7, narrow: 3 }[kind];
  return (
    <svg viewBox="0 0 34 106" className="h-[106px] w-[34px] bg-[#dcdcdc]">
      {keys.map((y) => (
        <rect key={y} x={0} y={y - h / 2} width={21} height={h} fill="#111" />
      ))}
      {kind === "mid" && (
        <>
          <path d="M21 13h10M21 28h10M0 39h34M21 50h10M0 77h34M21 88h10" stroke="#333" strokeWidth="2" />
          <rect x="14" y="52" width="20" height="24" fill="#999" />
          <text x="15" y="73" fontSize="24" fill="#fff">2</text>
        </>
      )}
    </svg>
  );
}

const padButton = "h-[39px] rounded-md border border-[#242424] bg-gradient-to-b from-[#666] to-[#4e4e4e] leading-none";

function TrackHeader({ track }: { track: Track }) {
  const inst = track.kind === "inst";
  return (
    <div className="flex flex-1 overflow-hidden border-b-4 border-black bg-[#2d2d2d]">
      <div className={`flex w-[35px] flex-col items-center justify-between pt-1.5 pb-2 ${inst ? "bg-[#80561a]" : "bg-[#32500f]"}`}>
        <button
          aria-label={`${track.name} options`}
          className={`flex size-[26px] items-center justify-center rounded-full ${inst ? "bg-[#b49a70] text-[#2a1c08]" : "bg-[#849a68] text-[#14200a]"}`}
        >
          <Tri className="scale-75" />
        </button>
        <button
          aria-label={`${track.name} automation lanes`}
          className={`h-[25px] w-[25px] rounded-sm border-2 ${inst ? "border-[#6b4614] bg-[#b49a70] text-[#3c2a0c]" : "border-[#2a420e] bg-[#849a68] text-[#1c2e0c]"}`}
        >
          <Svg w={21} h={21}><circle cx="4" cy="5" r="2.500" strokeWidth="2" /><circle cx="16" cy="16" r="2.500" strokeWidth="2" /><path d="M6 7c6 0 2 8 8 8" strokeWidth="2" /></Svg>
        </button>
      </div>
      <div className="w-[281px] pt-0.5 pl-0.5">
        <div className="flex h-[38px] w-[275px] bg-[#1f1f1f]">
          <span className="flex-1 text-center text-[30px] leading-10 font-bold text-[#bcbcbc]">{track.name}</span>
          {inst && (
            <button aria-label={`${track.name} instrument`} className="flex w-[30px] justify-center border-l-2 border-[#2d2d2d] pt-2 text-[#aaa]">
              <Tri />
            </button>
          )}
        </div>
        <div className="mt-3 flex w-[270px] items-center justify-end gap-[7px] text-[26px] text-[#c4c4c4]">
          <div className="flex h-[34px] overflow-hidden rounded border border-[#222] bg-gradient-to-b from-[#3c3c3c] to-[#484848] text-[26px] leading-none font-bold">
            {inst && (
              <>
                <button aria-label="Record arm" className="flex w-[26px] items-center justify-center bg-[#5e2c2e]">
                  <span className="size-[15px] rounded-full bg-[#ddd5d5]" />
                </button>
                <button className="w-[26px] border-l border-[#2a2a2a] text-[#eee]">I</button>
              </>
            )}
            <button className={`border-l border-[#2a2a2a] ${inst ? "w-[26px] text-[#eee]" : "w-[30px] text-[#949494]"}`}>S</button>
            <button className="w-[30px] border-l border-[#2a2a2a] text-[#eee]">M</button>
          </div>
          {inst ? (
            <>
              <button className={`${padButton} w-[56px]`}>clps</button>
              <button className={`${padButton} w-[34px]`}>p</button>
              <button className={`${padButton} w-[39px] text-[25px] text-[#30c068]`}>red</button>
            </>
          ) : (
            <>
              <button className={`${padButton} w-[77px]`}>vol</button>
              <button className={`${padButton} w-[59px] text-[25px] text-[#30c068]`}>read</button>
            </>
          )}
        </div>
      </div>
      <div className="flex w-[54px] items-start gap-1 pt-0.5 pl-1">
        <div className="flex h-24 w-8 shrink-0 justify-between bg-black p-0.5">
          <div className="w-[13px] border-t-[10px] border-[#3c0202] bg-gradient-to-b from-[#141a04] from-40% to-[#2a2802] to-45%" />
          <div className="w-[13px] border-t-[10px] border-[#3c0202] bg-gradient-to-b from-[#141a04] from-40% to-[#2a2802] to-45%" />
        </div>
        {track.gain && <div className="mt-3.5 h-[60px] w-3 shrink-0 rounded-sm border-2 border-black bg-[#4a2804]" />}
      </div>
      <div className="flex w-[57px] flex-col items-center gap-2 border-r-4 border-[#181818] bg-[#282828] pt-[5px]">
        <button aria-label={`${track.name} inserts`} className="flex h-[43px] w-[42px] items-center justify-center rounded-lg border-2 border-[#505050]">
          <span className="flex h-[30px] w-[30px] items-center justify-center rounded-sm bg-[#b0b0b0] text-[#3a3a3a]">
            <Svg w={16} h={18}><path d="M2 2h12v14H2z" strokeWidth="3" /></Svg>
          </span>
        </button>
        <button aria-label={`${track.name} comments`} className="flex h-9 w-[35px] items-center justify-center rounded bg-[#626262] text-[#d4d4d4]">
          <CommentIcon />
        </button>
      </div>
      <Keyboard kind={track.keyboard} />
    </div>
  );
}

function ArrangeArea() {
  return (
    <main className="mt-0.5 flex min-w-0 flex-1 overflow-hidden">
      <div className="flex w-[463px] shrink-0 flex-col">
        <RulerLabels />
        <div className="flex h-[44px] shrink-0 gap-[5px] bg-black pt-1 pb-1 text-[#999]">
          <div className="flex w-[368px] items-start bg-[#383838] px-2 pt-1">
            <Svg w={34} h={26}><path d="M1 1h32v24H1zM9 1v24M17 1v24M25 1v24" strokeWidth="2.5" /></Svg>
            <Tri className="mt-0.5 ml-1.5" />
            <span className="mr-1.5 ml-auto"><Beat color="#3fa9f5" /></span>
            <Tri className="mt-0.5" />
          </div>
          <div className="flex w-[50px] items-center justify-center bg-[#383838]">
            <svg viewBox="0 0 24 30" className="h-[30px] w-6"><path d="M2 1h20v17l-10 10-10-10z" fill="#ffc400" stroke="#000" strokeWidth="2" /></svg>
          </div>
          <div className="w-[32px] bg-[#333]" />
        </div>
        <div className="min-h-0 flex-1 overflow-hidden">
          <div className="flex h-[1075px] flex-col">
            {tracks.map((t) => <TrackHeader key={t.name} track={t} />)}
          </div>
        </div>
        <div className="flex h-[37px] shrink-0 items-center bg-[#2a2a2a] text-[#888]">
          <button aria-label="Collapse lists" className="flex w-[39px] justify-center border-r-2 border-[#1c1c1c]">
            <Svg w={22} h={20}><path d="M20 0v20" /><path d="M0 10l9-8v5h6v6H9v5z" fill="currentColor" stroke="none" /></Svg>
          </button>
          <button aria-label="Track heights" className="flex w-[37px] justify-center border-r-2 border-[#1c1c1c]">
            <Svg w={20} h={24}><path d="M0 2h20" strokeWidth="4" /><path d="M10 24l-8-9h5V7h6v8h5z" fill="currentColor" stroke="none" /></Svg>
          </button>
        </div>
      </div>

      <div className="relative flex min-w-0 flex-1 flex-col">
        <Rulers />
        <div className="h-[44px] shrink-0 border-t-4 border-b-2 border-black bg-[#2a2a2a]">
          <svg className="h-full w-full">
            <GridLines height={32} color="#3c3c44" />
            {[0, ...markers.map((m) => m.x)].map((x) => (
              <rect key={x} x={x - 1} y={0} width={3} height={44} fill="#f6a808" shapeRendering="crispEdges" />
            ))}
          </svg>
        </div>
        <div className="min-h-0 flex-1 overflow-hidden">
          <div className="flex h-[1075px] flex-col">
            {tracks.map((t) => <Lane key={t.name} track={t} />)}
          </div>
        </div>
        <div className="flex h-[37px] shrink-0 items-center bg-[#1d1d1d]">
          <ScrollButton label="Scroll left" className="w-[42px]"><Tri dir="left" /></ScrollButton>
          <div className="ml-[5px] h-4 w-8/13 bg-[#353535]" />
          <div className="ml-auto flex gap-0.5">
            <ScrollButton label="Scroll right" className="w-[38px]"><Tri dir="right" /></ScrollButton>
            <ScrollButton label="Zoom out horizontally" className="w-[37px]"><Svg w={16} h={16}><path d="M0 8h16" strokeWidth="5" /></Svg></ScrollButton>
            <ScrollButton label="Zoom in horizontally" className="w-[36px]"><Svg w={16} h={16}><path d="M0 8h16M8 0v16" strokeWidth="5" /></Svg></ScrollButton>
            <ScrollButton label="Follow playback" className="w-[38px]">
              <Svg w={22} h={20}><path d="M2 0v20" strokeWidth="4" /><path d="M22 10l-9-8v5H7v6h6v5z" fill="currentColor" stroke="none" /></Svg>
            </ScrollButton>
          </div>
        </div>
        {/* playhead and edit cursor */}
        <div className="absolute top-0 bottom-[37px] left-0 w-[3px] bg-[#f2f2f2]" />
        <svg viewBox="0 0 18 40" className="absolute top-0 left-0 h-10 w-[18px]"><path d="M2 0h5v20h9L2 40z" fill="#2288cc" /></svg>
        <div className="absolute top-0 left-[1768px] h-[340px] w-0.5 bg-[#a01818]" />
      </div>

      <div className="flex w-[37px] shrink-0 flex-col bg-[#202020]">
        <div className="grid h-[298px] shrink-0 grid-rows-7">
          <button aria-label="Ruler options" className="flex items-center justify-center border-b-2 border-l-2 border-[#1a1a1a] bg-[#303030] text-[#808080]">
            <Svg w={20} h={22}><path d="M0 2h20" strokeWidth="4" /><path d="M10 22l-8-9h5V6h6v7h5z" fill="currentColor" stroke="none" /></Svg>
          </button>
          <div className="border-b-2 border-[#1a1a1a] bg-[#2c2c2c]" />
          <div className="border-b-2 border-[#1a1a1a] bg-[#2c2c2c]" />
          <div className="border-b-2 border-[#00502f] bg-[#006243]" />
          <div className="border-b-2 border-[#004a5c] bg-[#006076]" />
          <div className="border-b-2 border-[#1a1a1a] bg-[#2c2c2c]" />
          <div className="border-b-2 border-[#2e2e2e] bg-[#252525]" />
        </div>
        <div className="mt-[5px]"><SortButton /></div>
        <ScrollButton label="Waveform height" className="mt-0.5 h-[49px]">
          <Svg w={26} h={26}><path d="M0 12l3-12 3 8 4 3 4-5 4 5 8 2-8 2-4 5-4-5-4 3-3 8-3-12z" fill="currentColor" stroke="none" /></Svg>
        </ScrollButton>
        <ScrollButton label="MIDI height" className="mt-0.5 h-[49px]">
          <Svg w={24} h={20}><path d="M0 3h15M8 16h15" strokeWidth="5" /></Svg>
        </ScrollButton>
        <ScrollButton label="Scroll up" className="mt-1 h-[40px]"><Tri dir="up" /></ScrollButton>
        <div className="ml-3 h-[438px] w-[15px] shrink-0 bg-[#353535]" />
        <div className="flex-1" />
        <ScrollButton label="Scroll down" className="h-[39px]"><Tri /></ScrollButton>
        <ScrollButton label="Zoom out vertically" className="mt-0.5"><Svg w={16} h={16}><path d="M0 8h16" strokeWidth="4" /></Svg></ScrollButton>
        <ScrollButton label="Zoom in vertically" className="mt-0.5"><Svg w={16} h={16}><path d="M0 8h16M8 0v16" strokeWidth="4" /></Svg></ScrollButton>
        <div className="mt-0.5 h-[37px] shrink-0 bg-[#242424]" />
      </div>
    </main>
  );
}

function EditorTabs() {
  const tabs = [
    { name: "MIDI EDITOR", pop: false, dim: false },
    { name: "CLIP EFFECTS", pop: true, dim: false },
    { name: "MELODYNE", pop: true, dim: true },
    { name: "RX SPECTRAL EDITOR", pop: true, dim: true },
  ];
  return (
    <div className="relative mx-[10px] mt-[13px] mb-2 flex h-[54px] shrink-0 bg-[#181818] text-[26px] font-bold">
      <div className="flex w-[59px] justify-center pt-2"><RoundMenu label="Editor tabs menu" /></div>
      {tabs.map((tab) => (
        <button
          key={tab.name}
          className={`flex h-[44px] items-center gap-5 border-r-2 border-[#141414] bg-[#202020] pr-[34px] pl-[33px] ${tab.dim ? "text-[#4c4c4c]" : "text-[#7c7c7c]"}`}
        >
          {tab.name}
          {tab.pop && <PopOut />}
        </button>
      ))}
      {/* resize grip */}
      <Svg w={28} h={28} className="absolute -right-2 -bottom-1.5 text-[#555]"><path d="M2 28L28 2M11 28l17-17M20 28l8-8" strokeWidth="2" /></Svg>
    </div>
  );
}

function EditWindow() {
  return (
    <section className="absolute top-[5px] right-[41px] bottom-[139px] left-0 flex flex-col rounded-tr-xl border-b-2 border-[#3fb4c8] bg-[#b9d0ea] pb-[18px]">
      <TitleBar />
      <div className="mr-[19px] flex min-h-0 flex-1 flex-col bg-black">
        <Toolbar />
        <div className="flex min-h-0 flex-1 px-[10px] pt-[11px]">
          <aside className="mr-[13px] flex w-[252px] shrink-0 flex-col gap-[13px]">
            <TrackListPanel />
            <GroupsPanel />
          </aside>
          <ArrangeArea />
          <div className="w-3 shrink-0" />
          <ClipsPanel />
        </div>
        <EditorTabs />
      </div>
    </section>
  );
}

/* ---------- mix window, mostly covered ---------- */

function MixWindow() {
  return (
    <section className="absolute inset-x-[553px] top-0 bottom-[30px] flex flex-col justify-end bg-[#d6e4f2] px-[19px] pb-5">
      <div className="flex h-[92px] bg-black px-[10px] pb-[11px]">
        <div className="mr-[12px] flex w-[242px] shrink-0 bg-[#2d2d2d]">
          <span className="w-[44px] border-r-2 border-[#242424]" />
          <span className="w-[30px] border-r-2 border-[#242424]" />
          <span className="w-[40px] border-r-2 border-[#242424]" />
          <span className="flex-1" />
          <span className="flex w-[37px] flex-col justify-end bg-[#1c1c1c]"><span className="h-10 bg-[#2b2b2b]" /></span>
        </div>
        <div className="flex min-w-0 flex-1 flex-col">
          <div className="flex h-[44px] overflow-hidden bg-[#2d2d2d]">
            {mixLevels.map((level, i) => (
              <div key={level} className="flex flex-1 border-r-[5px] border-black px-[11px] pt-[23px]">
                <div className="h-10 flex-1 border-8 border-b-0 border-[#101010] bg-black pl-4 text-[24px] leading-7 font-bold text-[#39d47c]">
                  {level}
                  {i === 10 && <span className="pl-7 text-[#2a8fd8]">79.2</span>}
                </div>
              </div>
            ))}
            <div className="w-3 bg-[#242424]" />
          </div>
          <div className="flex h-[37px] items-center bg-[#1d1d1d] text-[#888]">
            <button aria-label="Collapse mix list" className="flex w-[36px] justify-center"><Svg w={22} h={20}><path d="M20 0v20" /><path d="M0 10l9-8v5h6v6H9v5z" fill="currentColor" stroke="none" /></Svg></button>
            <button aria-label="Mix views" className="flex w-[92px] items-start gap-1.5 pl-[10px]">
              <Svg w={34} h={26}><path d="M1 1h32v24H1zM1 9h32M1 17h32" strokeWidth="2.5" /></Svg>
              <Tri />
            </button>
            <ScrollButton label="Scroll mixer left" className="w-[40px]"><Tri dir="left" /></ScrollButton>
            <div className="ml-[5px] h-4 w-[83%] bg-[#353535]" />
            <ScrollButton label="Scroll mixer right" className="ml-auto w-[38px]"><Tri dir="right" /></ScrollButton>
          </div>
        </div>
        <div className="flex w-[43px] flex-col justify-between pl-1">
          <ScrollButton label="Scroll mixer down" className="mt-1 h-[40px]"><Tri /></ScrollButton>
          <ScrollButton label="Narrow mix"><Svg w={22} h={20}><path d="M20 0v20" /><path d="M0 10l9-8v5h6v6H9v5z" fill="currentColor" stroke="none" /></Svg></ScrollButton>
        </div>
      </div>
    </section>
  );
}

/* ---------- taskbar ---------- */

function EdgeIcon() {
  return (
    <svg viewBox="0 0 60 60" className="size-[60px]">
      <defs>
        <linearGradient id="edgeTop" x1="0" x2="1"><stop offset="0" stopColor="#1a9ae0" /><stop offset="0.6" stopColor="#2cc6d2" /><stop offset="1" stopColor="#62dc5a" /></linearGradient>
        <linearGradient id="edgeBase" x1="0" y1="0" x2="1" y2="1"><stop offset="0" stopColor="#1683d8" /><stop offset="1" stopColor="#0c4ea0" /></linearGradient>
      </defs>
      <path d="M1 27C3 11 15 0 31 0c17 0 29 12 29 25 0 9-7 15-15 15-6 0-10-2-9-4 3-3 3-6 2-9-3-8-10-11-17-11C11 16 4 21 1 27z" fill="url(#edgeTop)" />
      <path d="M1 27c3-7 10-11 20-11 6 0 10 2 13 5-8-2-13 5-12 13 1 11 12 19 24 15 4-1 7-4 9-5 1 0 2 1 1 2-5 8-14 14-25 14C14 60 0 47 0 31z" fill="url(#edgeBase)" />
      <path d="M22 34c1 12 12 19 24 15-4 6-10 9-17 9-9-2-15-12-12-22 1-6 6-12 13-13-5 2-8 6-8 11z" fill="#1464b4" />
    </svg>
  );
}

function ChromeIcon() {
  return (
    <svg viewBox="0 0 60 60" className="size-[60px]">
      <path d="M30 30L4 15A30 30 0 0 1 56 15H30z" fill="#e33b2e" />
      <path d="M56 15a30 30 0 0 1-26 45l13-22.500V15z" fill="#fcc31e" />
      <path d="M4 15a30 30 0 0 0 26 45l13-22.500L30 30 17 37.500z" fill="#2da44e" />
      <circle cx="30" cy="30" r="15" fill="#fff" />
      <circle cx="30" cy="30" r="11.500" fill="#2f7cf0" />
    </svg>
  );
}

function TaskButton({ label, active = false, running = false, children }: { label: string; active?: boolean; running?: boolean; children: ReactNode }) {
  return (
    <button
      aria-label={label}
      className={`flex h-full w-[121px] items-center justify-center border-b-[5px] pt-1 ${
        active ? "border-[#76b9ed] bg-[#4b5c66]" : running ? "border-[#76b9ed]" : "border-transparent"
      }`}
    >
      {children}
    </button>
  );
}

function Taskbar() {
  return (
    <footer className="flex h-[100px] items-center bg-gradient-to-r from-[#233a42] from-50% to-[#1a2742] font-['Open_Sans','Segoe_UI',sans-serif] text-white">
      <button aria-label="Start" className="flex w-[121px] justify-center">
        <svg viewBox="0 0 40 40" className="size-10"><path d="M0 6l17-3v16H0zM19 3l21-3v19H19zM0 21h17v16L0 34zM19 21h21v19l-21-3z" fill="#fff" /></svg>
      </button>
      <label className="flex h-[98px] w-[718px] items-center border-2 border-[#c4c4c4] bg-[#f2f2f2] pl-7 text-black">
        <Svg w={50} h={50}><circle cx="31" cy="18" r="15" /><path d="M20 29L2 47" /></Svg>
        <input aria-label="Search" placeholder="Type here to search" className="ml-8 min-w-0 flex-1 bg-transparent pt-1 text-[36px] outline-none placeholder:text-[#222]" />
        <svg viewBox="0 0 154 62" className="mr-5 h-[62px] w-[154px]">
          <path d="M58 0c6 0 4 25 29 30-25 5-23 30-29 30S54 35 29 30C54 25 52 0 58 0z" fill="#fdb813" />
          <path d="M116 26c3 0 2 12 14 14-12 2-11 15-14 15s-2-13-14-15c12-2 11-14 14-14z" fill="#ffc83d" />
          <path d="M8 42c3 0 2 8 13 9-10 2-5 11-9 11s-3-8-12-8c9-3 5-12 8-12z" fill="#00a4ef" />
          <circle cx="100" cy="5" r="5" fill="#f25c22" />
          <circle cx="146" cy="56" r="5" fill="#7fba42" />
        </svg>
      </label>
      <div className="ml-0.5 flex h-full gap-[3px]">
        <TaskButton label="Task view">
          <Svg w={42} h={38}><path d="M2 0v6h24V0M2 38v-6h24v6M2 12h24v14H2zM38 0v4M38 20v18" strokeWidth="2.5" /><circle cx="38" cy="13" r="3" fill="currentColor" stroke="none" /></Svg>
        </TaskButton>
        <TaskButton label="File Explorer">
          <svg viewBox="0 0 54 46" className="h-[46px] w-[54px]">
            <path d="M0 3c0-2 1-3 3-3h16l6 6h26v12H0z" fill="#e0a100" />
            <path d="M0 12h24l6-7h21c2 0 3 1 3 3v32c0 2-1 3-3 3H3c-2 0-3-1-3-3z" fill="#ffd35c" />
            <path d="M9 46V28c0-3 2-5 5-5h26c3 0 5 2 5 5v18H34v-8H20v8z" fill="#3a96dd" />
          </svg>
        </TaskButton>
        <TaskButton label="Edge"><EdgeIcon /></TaskButton>
        <TaskButton label="Chrome" running><ChromeIcon /></TaskButton>
        <TaskButton label="Steam">
          <svg viewBox="0 0 56 56" className="size-14">
            <defs><linearGradient id="steam" x1="0" y1="0" x2="0" y2="1"><stop offset="0" stopColor="#131a30" /><stop offset="0.5" stopColor="#14386c" /><stop offset="1" stopColor="#0a86c4" /></linearGradient></defs>
            <circle cx="28" cy="28" r="27" fill="#fff" />
            <FaSteam size={56} fill="url(#steam)" />
          </svg>
        </TaskButton>
        <TaskButton label="Spotify">
          <span className="rounded-full bg-[#111]"><FaSpotify className="size-[58px] text-[#1ed760]" /></span>
        </TaskButton>
        <TaskButton label="Settings">
          <svg viewBox="0 0 44 44" className="size-11">
            <circle cx="22" cy="22" r="19" fill="none" stroke="#fff" strokeWidth="6" strokeDasharray="7.460 7.460" />
            <circle cx="22" cy="22" r="14" fill="none" stroke="#fff" strokeWidth="5" />
          </svg>
        </TaskButton>
        <TaskButton label="Discord">
          <span className="flex size-[60px] items-center justify-center rounded-full bg-[#5865f2]"><FaDiscord className="size-9" /></span>
        </TaskButton>
        <TaskButton label="Notes app">
          <svg viewBox="0 0 60 60" className="size-[60px]">
            <defs><linearGradient id="tile" x1="0" y1="0" x2="0" y2="1"><stop offset="0" stopColor="#fff" /><stop offset="0.5" stopColor="#bbb" /><stop offset="1" stopColor="#fff" /></linearGradient></defs>
            <rect width="60" height="60" rx="13" fill="url(#tile)" />
            <path d="M26 12C12 16 4 26 7 36c4 12 18 14 26 13 12-2 21-12 20-20-2-9-14-11-24-8-9 3-14 10-12 16 3 6 14 5 20 0 3-3 4-6 1-7-3 0-6 2-8 4" fill="none" stroke="#737578" strokeWidth="5" strokeLinecap="round" />
          </svg>
        </TaskButton>
        <TaskButton label="Pro Tools" active><AvidLogo className="size-[60px]" /></TaskButton>
      </div>

      <div className="ml-auto flex items-center pt-0.5">
        <svg viewBox="0 0 60 40" className="h-10 w-[60px]">
          <defs><linearGradient id="cloud" x1="0" y1="0" x2="0" y2="1"><stop offset="0" stopColor="#5c8ce0" /><stop offset="1" stopColor="#a8c8fa" /></linearGradient></defs>
          <path d="M12 39a12 12 0 0 1-1-23A18 18 0 0 1 46 13a13 13 0 0 1 2 26z" fill="url(#cloud)" />
        </svg>
        <span className="ml-5 text-[34px] whitespace-pre">61°F  Cloudy</span>
        <div className="ml-[60px] flex items-center gap-6">
          <Svg w={34} h={20}><path d="M2 18L17 3l15 15" /></Svg>
          <svg viewBox="0 0 40 28" className="h-7 w-10"><path d="M9 27a9 9 0 0 1 0-17A13 13 0 0 1 32 10a9 9 0 0 1 0 17z" fill="#fff" /><path d="M9 10A13 13 0 0 1 32 10L10 22z" fill="#9aa3ad" /></svg>
          <Svg w={30} h={38}><rect x="2" y="8" width="18" height="20" rx="3" /><path d="M20 15l8-4v14l-8-4M5 3c4-2 10-2 14 0M5 34c4 2 10 2 14 0" strokeWidth="2.500" /></Svg>
          <Svg w={34} h={34}><path d="M3 33C3 16 16 3 33 3M11 33c0-12 9-21 22-21M20 33c0-7 5-12 13-12" strokeWidth="2.500" /><circle cx="29" cy="29" r="3.500" fill="currentColor" /></Svg>
          <Svg w={42} h={32}><path d="M12 8h26v20H12M38 14h4v8h-4M2 2v8h8V2M6 10v20" strokeWidth="2.500" /><rect x="14" y="12" width="20" height="12" fill="currentColor" stroke="none" /></Svg>
          <Svg w={42} h={36}><path d="M2 13h6l8-9v28l-8-9H2zM21 12c3 4 3 8 0 12M27 8c5 6 5 14 0 20" strokeWidth="2.500" /><path d="M33 3c8 9 8 21 0 30" strokeWidth="2.500" strokeOpacity="0.4" /></Svg>
          <Svg w={42} h={40}><path d="M14 32L34 3c4-2 6 1 4 5L18 34l-6 2zM14 18C4 20 0 32 4 38c6 0 8-8 18-14 8-3 16-2 18-8" strokeWidth="2.500" /></Svg>
        </div>
        <div className="w-[208px] text-center text-[28px] leading-[47px]">
          <div>1:58 AM</div>
          <div>5/26/2025</div>
        </div>
        <svg viewBox="0 0 40 40" className="ml-2.5 h-10 w-10"><path d="M0 0h40v34H26l-6 6-6-6H0z" fill="#fff" /><path d="M8 9h24M8 17h24M8 25h16" stroke="#1b2942" strokeWidth="2.500" /></svg>
        <div className="mr-[11px] ml-[49px] h-[100px] w-0.5 bg-[#5c6678]" />
      </div>
    </footer>
  );
}

export default function App() {
  return (
    <div className="flex h-screen flex-col overflow-hidden bg-[#4c4c4c] font-['Liberation_Sans',Arial,sans-serif]">
      <AppHeader />
      <div className="relative min-h-0 flex-1">
        <MixWindow />
        <EditWindow />
      </div>
      <Taskbar />
    </div>
  );
}
